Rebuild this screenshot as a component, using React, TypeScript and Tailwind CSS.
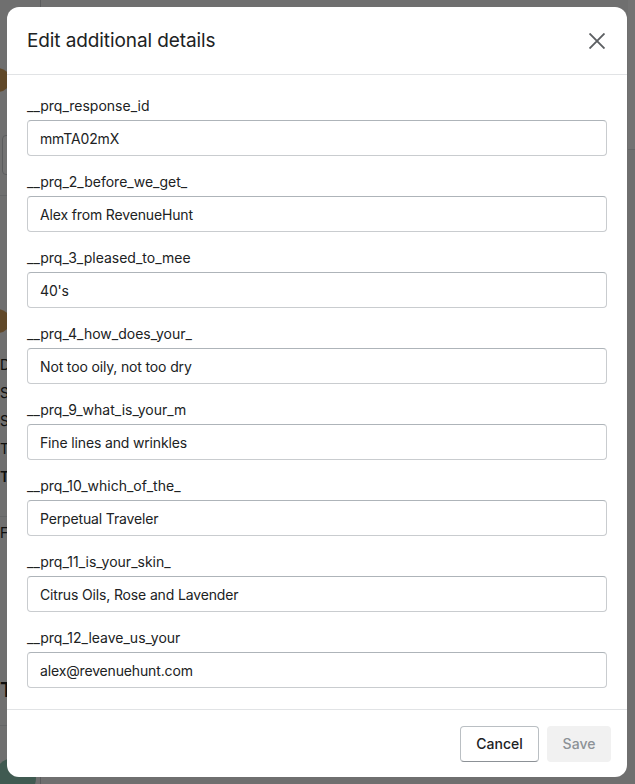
import React, { useState } from 'react';

type Field = { key: string; value: string };

const initialFields: Field[] = [
  { key: '__prq_response_id', value: 'mmTA02mX' },
  { key: '__prq_2_before_we_get_', value: 'Alex from RevenueHunt' },
  { key: '__prq_3_pleased_to_mee', value: "40's" },
  { key: '__prq_4_how_does_your_', value: 'Not too oily, not too dry' },
  { key: '__prq_9_what_is_your_m', value: 'Fine lines and wrinkles' },
  { key: '__prq_10_which_of_the_', value: 'Perpetual Traveler' },
  { key: '__prq_11_is_your_skin_', value: 'Citrus Oils, Rose and Lavender' },
  { key: '__prq_12_leave_us_your', value: 'alex@revenuehunt.com' },
];

// the order page behind the overlay; only a thin strip of it shows
const BackgroundPage: React.FC = () => (
  <div className="flex h-full w-full bg-[#f6f6f7]">
    <div className="flex w-[40px] shrink-0 flex-col self-start text-[14px] leading-[20px] text-[#202223] [&>*]:shrink-0">
      <div className="mt-[68px] ml-[-14px] h-[24px] w-[24px] rounded-full bg-[#d6a15c]" />
      <div className="mt-[43px] ml-[2px] h-[40px] w-[20px] rounded border border-[#c9cccf] bg-white" />
      <div className="mt-[20px] h-px bg-[#e1e3e5]" />
      <div className="mt-[113px] ml-[-14px] h-[24px] w-[24px] rounded-full bg-[#d6a15c]" />
      <div className="mt-[22px] flex flex-col gap-[8px]">
        <span>D</span>
        <span>S</span>
        <span>S</span>
        <span>T</span>
        <span className="font-semibold">T</span>
      </div>
      <div className="mt-[29px] h-px bg-[#e1e3e5]" />
      <span className="mt-[6px]">F</span>
      <span className="mt-[134px] text-[20px] font-semibold leading-[26px]">T</span>
      <div className="mt-[22px] h-px bg-[#e1e3e5]" />
      <div className="mt-[32px] ml-[-6px] h-[40px] w-[42px] rounded-full bg-[#8fc7b3]" />
    </div>
    <div className="flex-1 border-l border-[#c9cccf]" />
    <div className="h-[150px] w-[7px] shrink-0 self-start border-b border-[#e1e3e5] bg-white" />
  </div>
);

export default function App() {
  const [fields, setFields] = useState<Field[]>(initialFields);

  const update = (i: number, value: string) =>
    setFields((prev) => prev.map((f, j) => (j === i ? { ...f, value } : f)));

  return (
    <div
      className="relative h-[784px] w-full overflow-hidden"
      style={{ fontFamily: 'Inter, "Noto Sans", "Liberation Sans", sans-serif' }}
    >
      <BackgroundPage />

      {/* overlay + modal */}
      <div className="absolute inset-0 flex items-start justify-start bg-black/55 p-[7px]">
        <div className="flex h-[770px] w-[620px] flex-col overflow-hidden rounded-xl bg-white text-[#202223]">
          <div className="flex h-[68px] shrink-0 items-center justify-between border-b border-[#e1e3e5] pl-[20px] pr-[16px]">
            <h2 className="text-[19px] leading-[28px] font-normal tracking-[-0.1px]">Edit additional details</h2>
            <button className="flex h-[28px] w-[28px] items-center justify-center" aria-label="Close">
              <svg width="16" height="16" viewBox="0 0 16 16" fill="none">
                <path d="M0.5 0.5L15.5 15.5M15.5 0.5L0.5 15.5" stroke="#5c5f62" strokeWidth="1.9" />
              </svg>
            </button>
          </div>

          <div className="flex flex-1 flex-col gap-[16px] px-[20px] pt-[21px] pb-[19px]">
            {fields.map((f, i) => (
              <div key={f.key} className="flex flex-col gap-[4px]">
                <label className="text-[14px] leading-[20px]">{f.key}</label>
                <input
                  value={f.value}
                  onChange={(e) => update(i, e.target.value)}
                  className="h-[36px] w-full rounded-[4px] border border-[#c9cccf] border-t-[#aeb4b9] bg-white px-[12px] text-[14px] tracking-[-0.15px] text-[#202223] outline-none"
                />
              </div>
            ))}
          </div>

          <div className="flex h-[68px] shrink-0 items-center justify-end gap-[8px] border-t border-[#e1e3e5] px-[16px]">
            <button className="h-[36px] w-[79px] rounded-[4px] border border-[#babfc3] border-b-[#8c9196] bg-white text-[14px] font-medium text-[#202223]">
              Cancel
            </button>
            <button
              disabled
              className="h-[36px] w-[64px] rounded-[4px] bg-[#f1f1f1] text-[14px] font-medium text-[#8c9196]"
            >
              Save
            </button>
          </div>
        </div>
      </div>
    </div>
  );
}
